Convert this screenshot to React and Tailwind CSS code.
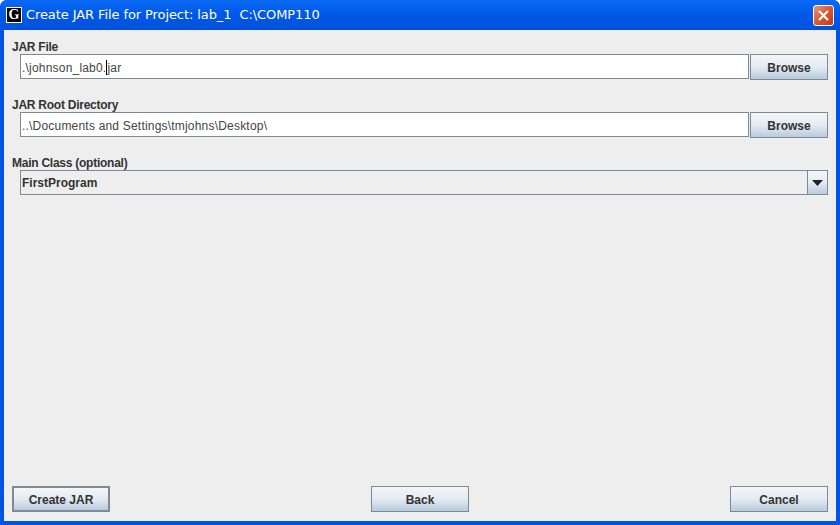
import React from "react";

const font = { fontFamily: '"Liberation Sans", Arial, sans-serif' };

const btn =
  "flex items-center justify-center border border-[#7a8a99] bg-gradient-to-b from-[#f3f6f9] via-[#e4ebf2] to-[#b9cbdd] text-[12px] font-bold text-[#333]";

const labelCls = "h-[14px] pl-[8px] text-[12px] leading-[15px] font-bold tracking-[-0.25px] text-[#333]";

const Field = ({ label, value, caret }) => (
  <div className="flex flex-col">
    <div className={labelCls}>{label}</div>
    <div className="flex h-[26px] pl-[16px] pr-[8px]">
      <div className="mb-px flex flex-1 items-center border border-[#7a8a99] bg-white pl-px pt-[2px] text-[12px] tracking-[0.2px] text-[#444]">
        {caret ? (
          <>
            <span>.\johnson_lab0.</span>
            <span className="h-[15px] w-px bg-black"></span>
            <span>jar</span>
          </>
        ) : (
          value
        )}
      </div>
      <button className={`${btn} ml-px w-[78px] pt-px`}>Browse</button>
    </div>
  </div>
);

export default function App() {
  return (
    <div
      style={font}
      className="flex h-[525px] w-[840px] flex-col overflow-hidden rounded-t-[7px] bg-[#0054e3]"
    >
      {/* title bar */}
      <div className="flex h-[30px] shrink-0 items-center bg-gradient-to-b from-[#0a6af5] via-[#0058e6] to-[#0052dc] px-[6px]">
        <div className="flex h-[16px] w-[16px] items-center justify-center border border-white bg-black text-[14px] leading-none font-bold text-white [font-family:'Liberation_Serif',serif]">
          G
        </div>
        <div className="ml-[4px] flex-1 text-[13px] whitespace-pre text-white [font-family:'DejaVu_Sans',sans-serif] tracking-[-0.09px]">
          Create JAR File for Project: lab_1  C:\COMP110
        </div>
        <div className="flex h-[21px] w-[21px] items-center justify-center rounded-[3px] border border-white bg-gradient-to-br from-[#e9967a] via-[#d9572f] to-[#c23a12]">
          <svg width="13" height="13" viewBox="0 0 13 13">
            <path d="M2 2 L11 11 M11 2 L2 11" stroke="#fff" strokeWidth="2.2" fill="none" />
          </svg>
        </div>
      </div>

      {/* dialog body */}
      <div className="mx-[4px] mb-[4px] flex flex-1 flex-col bg-[#eeeeee] pt-[10px]">
        <div className="flex flex-col gap-[18px]">
          <Field label="JAR File" caret />
          <Field label="JAR Root Directory" value="..\Documents and Settings\tmjohns\Desktop\" />
          <div className="flex flex-col">
            <div className={labelCls}>Main Class (optional)</div>
            <div className="flex h-[25px] pl-[16px] pr-[8px]">
              <div className="flex flex-1 items-center border border-[#7a8a99] bg-[#eeeeee] pl-[1px] text-[12px] font-bold text-[#333]">
                FirstProgram
              </div>
              <button className={`${btn} w-[20px] border-l-0`}>
                <svg width="11" height="6" viewBox="0 0 11 6">
                  <path d="M0 0 H11 L5.5 6 Z" fill="#222" />
                </svg>
              </button>
            </div>
          </div>
        </div>

        <div className="mt-auto mb-[9px] flex items-center justify-between px-[8px]">
          <button className={`${btn} h-[26px] w-[98px] border-2 border-[#7f8a96] pt-px`}>Create JAR</button>
          <button className={`${btn} h-[26px] w-[98px] pt-px`}>Back</button>
          <button className={`${btn} h-[26px] w-[98px] pt-px`}>Cancel</button>
        </div>
      </div>
    </div>
  );
}
